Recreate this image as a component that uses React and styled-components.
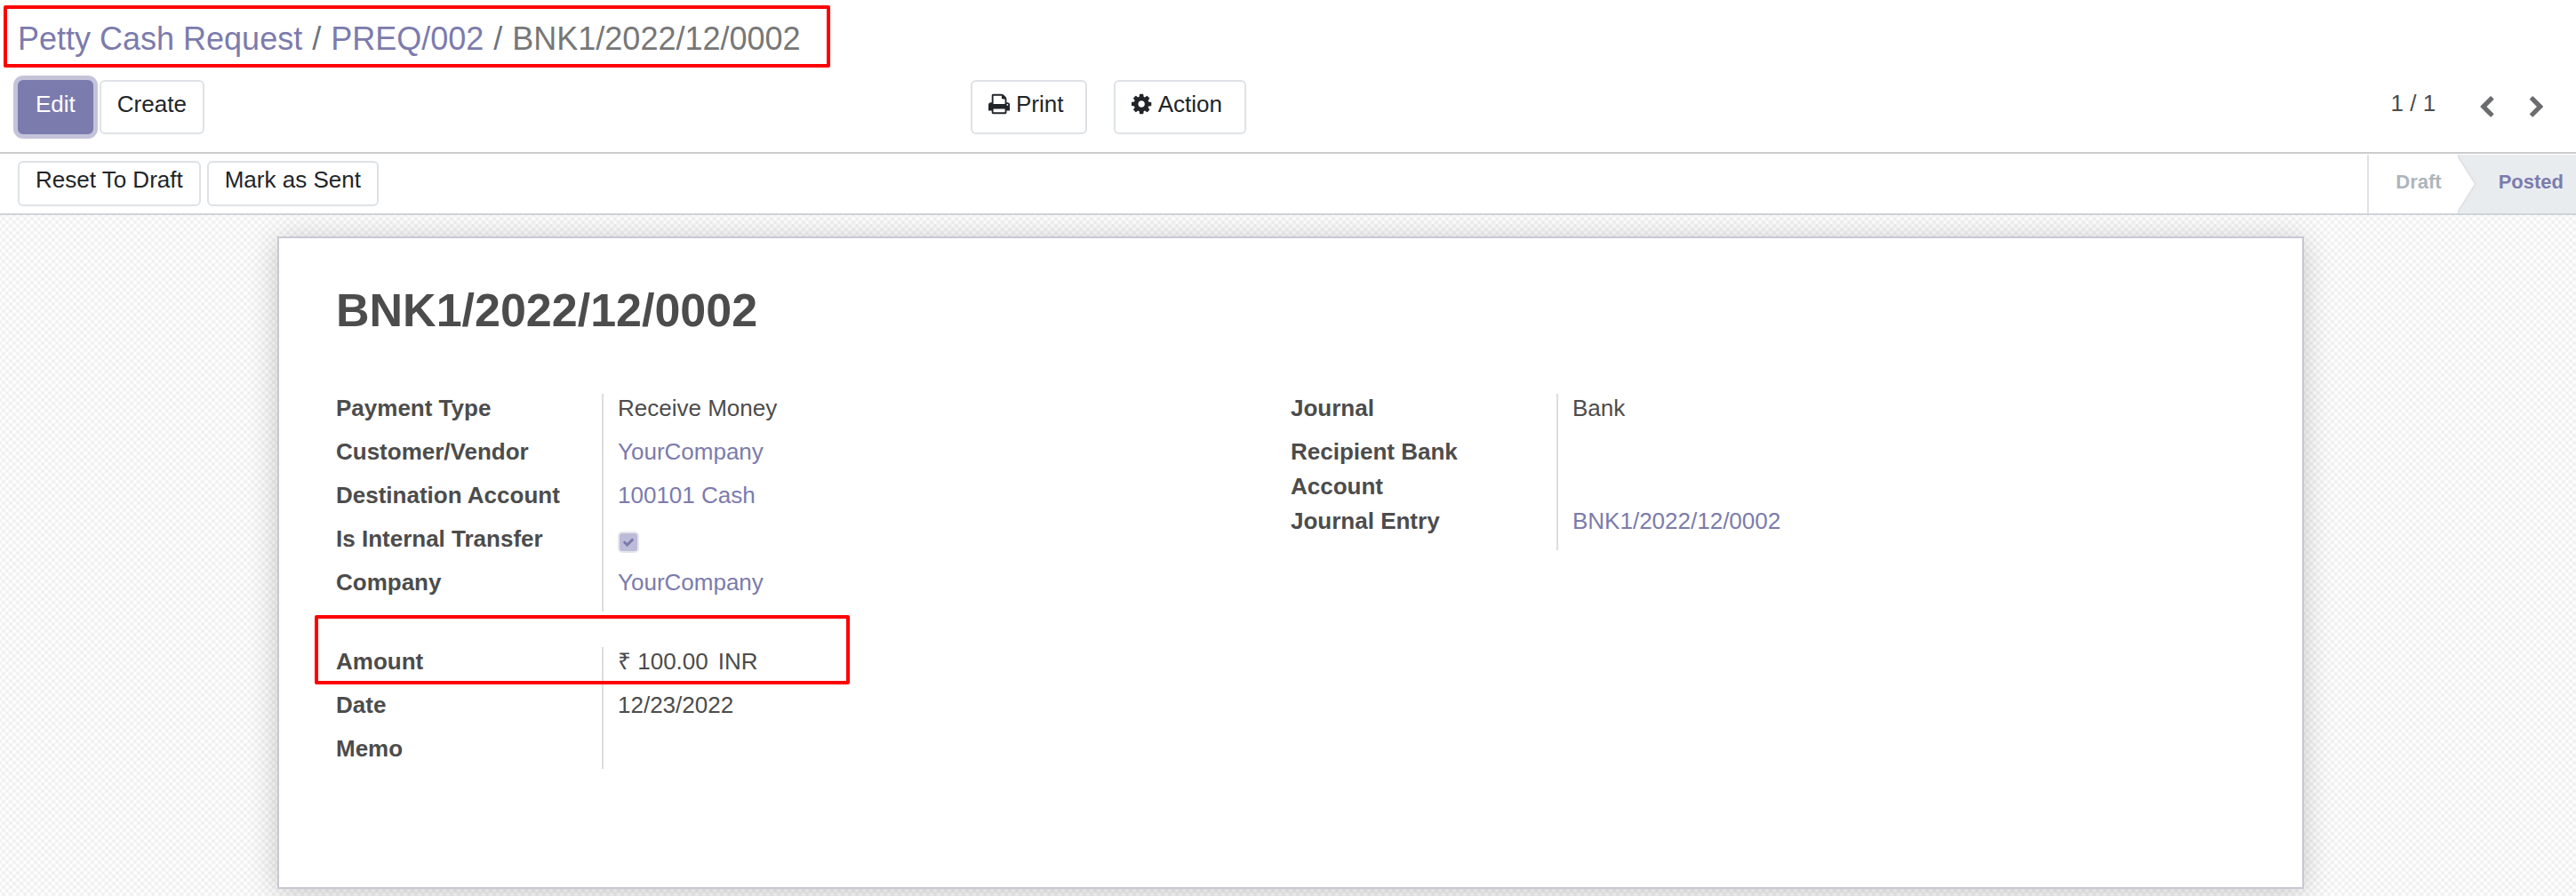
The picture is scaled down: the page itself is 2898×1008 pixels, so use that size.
import React from "react";
import styled, { createGlobalStyle } from "styled-components";

const link = "#7c7bad";
const ink = "#4c4c4c";

const GlobalStyle = createGlobalStyle`
  *, *::before, *::after { box-sizing: border-box; }
  html, body, #root { min-height: 100vh; }
  body {
    margin: 0;
    background: #fff;
    color: ${ink};
    font: 26px/39px "Liberation Sans", Arial, sans-serif;
  }
  #root { display: flex; }
`;

const Page = styled.div`
  position: relative;
  display: flex;
  flex-direction: column;
  flex: 1;
  min-height: 100vh;
`;

const ControlPanel = styled.header`
  padding: 17px 20px 20px;
  border-bottom: 2px solid #ccc;
`;

const Breadcrumb = styled.nav`
  display: flex;
  font-size: 36px;
  line-height: 54px;
  color: #777;
`;

const Separator = styled.span`
  padding: 0 11px;
  color: #6c757d;
`;

const Link = styled.a`
  color: ${link};
  text-decoration: none;
`;

const Toolbar = styled.div`
  display: grid;
  grid-template-columns: 3fr 5fr;
  margin-top: 19px;
`;

const Cluster = styled.div`
  display: flex;
  gap: ${(p) => p.$gap}px;
`;

const Spread = styled.div`
  display: flex;
  justify-content: space-between;
`;

const Button = styled.button`
  display: flex;
  gap: 7px;
  padding: ${(p) => (p.$compact ? "0 18px 8px" : "6px 18px 12px")};
  padding-right: ${(p) => (p.$menu ? 25 : 18)}px;
  border: 2px solid ${(p) => (p.$primary ? link : "#dee2e6")};
  border-radius: 6px;
  background: ${(p) => (p.$primary ? link : "#fff")};
  box-shadow: ${(p) => (p.$primary ? "0 0 0 5px rgba(124, 123, 173, 0.45)" : "none")};
  color: ${(p) => (p.$primary ? "#fff" : "#212529")};
  font: inherit;
  white-space: nowrap;
`;

const Icon = styled.svg`
  height: 26px;
  margin-top: 6px;
  fill: currentColor;
`;

const Pager = styled.div`
  display: flex;
  align-items: flex-start;
`;

const PagerButton = styled.button`
  display: flex;
  padding: 11px 20px;
  border: 0;
  background: none;
  color: #6b6c70;

  & + & { margin-right: -3px; }
`;

const PagerCount = styled.span`
  padding: 7px 30px 0 0;
`;

const StatusBar = styled.div`
  display: flex;
  justify-content: space-between;
  padding-left: 20px;
  border-bottom: 2px solid #ced4da;
`;

const StatusActions = styled(Cluster)`
  padding: 8px 0;
`;

const Steps = styled.ol`
  display: flex;
  margin: 1px 0 0;
  padding: 0;
  list-style: none;
  border-left: 2px solid #dee2e6;
  font-size: 22px;
  font-weight: bold;
  line-height: 62px;
`;

const Step = styled.li`
  position: relative;
  padding: ${(p) => (p.$active ? "0 14px 0 46px" : "0 18px 0 30px")};
  background: ${(p) => (p.$active ? "#e9ecef" : "#fff")};
  color: ${(p) => (p.$active ? link : "#adb5bd")};
`;

const StepArrow = styled.svg`
  position: absolute;
  top: 0;
  left: 0;
  width: 22px;
  height: 100%;
  fill: #fff;
  stroke: #dee2e6;
  stroke-width: 2px;
`;

const Backdrop = styled.main`
  flex: 1;
  padding: 24px 0 8px 6px;
  background-color: #f7f7f7;
  background-image:
    radial-gradient(circle at 4px 0, #fff 1px, transparent 3px),
    radial-gradient(circle at 4px 8px, #fff 1px, transparent 3px),
    radial-gradient(circle at 0 4px, #fff 1px, transparent 3px),
    radial-gradient(circle at 8px 4px, #fff 1px, transparent 3px),
    radial-gradient(circle at 4px 4px, #eee 1px, transparent 3px),
    radial-gradient(circle at 0 0, #eee 1px, transparent 3px),
    radial-gradient(circle at 8px 8px, #eee 1px, transparent 3px),
    radial-gradient(circle at 8px 0, #eee 1px, transparent 3px),
    radial-gradient(circle at 0 8px, #eee 1px, transparent 3px);
  background-size: 8px 8px;
`;

const Sheet = styled.section`
  max-width: 2280px;
  min-height: 734px;
  margin: 0 auto;
  padding: 42px 64px;
  border: 2px solid #c8c8d3;
  background: #fff;
  box-shadow: 0 4px 32px rgba(0, 0, 0, 0.2);
`;

const Title = styled.h1`
  margin: 0 0 52px;
  font-size: 52px;
  line-height: 78px;
`;

const Columns = styled.div`
  display: grid;
  grid-template-columns: 1fr 1fr;
  align-items: start;
`;

const Group = styled.dl`
  margin: 0 0 37px;
  padding-bottom: 3px;
  background: linear-gradient(#ddd, #ddd) 299px 3px / 2px 100% no-repeat;
`;

const Row = styled.div`
  display: grid;
  grid-template-columns: 299px 1fr;
`;

const Term = styled.dt`
  padding-right: 60px;
  font-weight: bold;
  white-space: ${(p) => (p.$wrap ? "normal" : "nowrap")};
`;

const Value = styled.dd`
  display: flex;
  gap: 11px;
  margin: 0;
  padding: 0 0 10px 18px;

  &:empty { padding-bottom: 0; }
`;

const CheckWrap = styled.span`
  display: grid;
  width: 24px;
  height: 24px;
  margin: 11px 0 4px;

  & > * { grid-area: 1 / 1; }
`;

const Checkbox = styled.input`
  appearance: none;
  width: 24px;
  height: 24px;
  margin: 0;
  border: 2px solid #e4e6ec;
  border-radius: 5px;
  background: #bdbcd8;
`;

const CheckMark = styled.svg`
  place-self: center;
  width: 14px;
  height: 14px;
  fill: ${link};
  pointer-events: none;
`;

const Highlight = styled.div`
  position: absolute;
  top: ${(p) => p.$top}px;
  left: ${(p) => p.$left}px;
  width: ${(p) => p.$width}px;
  height: ${(p) => p.$height}px;
  border: 4px solid #f00;
  border-radius: 2px;
  pointer-events: none;
`;

const paths = {
  print:
    "M448 1536h896v-256h-896v256zm0-640h896v-384h-160q-40 0-68-28t-28-68v-160h-640v640zm1152 64q0-26-19-45t-45-19-45 19-19 45 19 45 45 19 45-19 19-45zm128 0v416q0 13-9.5 22.5t-22.5 9.5h-224v160q0 40-28 68t-68 28h-960q-40 0-68-28t-28-68v-160h-224q-13 0-22.5-9.5t-9.5-22.5v-416q0-79 56.5-135.5t135.5-56.5h64v-544q0-40 28-68t68-28h672q40 0 88 20t76 48l152 152q28 28 48 76t20 88v256h64q79 0 135.5 56.5t56.5 135.5z",
  cog: "M1152 896q0-106-75-181t-181-75-181 75-75 181 75 181 181 75 181-75 75-181zm512-109v222q0 12-8 23t-20 13l-185 28q-19 54-39 91 35 50 107 138 10 12 10 25t-9 23q-27 37-99 108t-94 71q-12 0-26-9l-138-108q-44 23-91 38-16 136-29 186-7 28-36 28h-222q-14 0-24.5-8.5t-11.5-21.5l-28-184q-49-16-90-37l-141 107q-10 9-25 9-14 0-25-11-126-114-165-168-7-10-7-23 0-12 8-23 15-21 51-66.5t54-70.5q-27-50-41-99l-183-27q-13-2-21-12.5t-8-23.5v-222q0-12 8-23t19-13l186-28q14-46 39-92-40-57-107-138-10-12-10-24 0-10 9-23 26-36 98.5-107.5t94.5-71.5q13 0 26 10l138 107q44-23 91-38 16-136 29-186 7-28 36-28h222q14 0 24.5 8.5t11.5 21.5l28 184q49 16 90 37l142-107q9-9 24-9 13 0 25 10 129 119 165 170 7 8 7 22 0 12-8 23-15 21-51 66.5t-54 70.5q26 50 41 98l183 28q13 2 21 12.5t8 23.5z",
  left: "M1427 301l-531 531 531 531q19 19 19 45t-19 45l-166 166q-19 19-45 19t-45-19l-742-742q-19-19-19-45t19-45l742-742q19-19 45-19t45 19l166 166q19 19 19 45t-19 45z",
  right:
    "M1363 877l-742 742q-19 19-45 19t-45-19l-166-166q-19-19-19-45t19-45l531-531-531-531q-19-19-19-45t19-45l166-166q19-19 45-19t45 19l742 742q19 19 19 45t-19 45z",
  check:
    "M1671 566q0 40-28 68l-724 724-136 136q-28 28-68 28t-68-28l-136-136-362-362q-28-28-28-68t28-68l136-136q28-28 68-28t68 28l294 295 656-657q28-28 68-28t68 28l136 136q28 28 28 68z",
};

function Glyph({ name, box }) {
  return (
    <Icon viewBox={box} aria-hidden="true">
      <path d={paths[name]} />
    </Icon>
  );
}

function Field({ label, wrap, children }) {
  return (
    <Row>
      <Term $wrap={wrap}>{label}</Term>
      <Value>{children}</Value>
    </Row>
  );
}

export default function App() {
  return (
    <Page>
      <GlobalStyle />
      <ControlPanel>
        <Breadcrumb aria-label="Breadcrumb">
          <Link href="#requests">Petty Cash Request</Link>
          <Separator>/</Separator>
          <Link href="#preq-002">PREQ/002</Link>
          <Separator>/</Separator>
          <span>BNK1/2022/12/0002</span>
        </Breadcrumb>
        <Toolbar>
          <Cluster $gap={7}>
            <Button type="button" $primary>Edit</Button>
            <Button type="button">Create</Button>
          </Cluster>
          <Spread>
            <Cluster $gap={30}>
              <Button type="button" $menu>
                <Glyph name="print" box="64 0 1664 1792" />
                Print
              </Button>
              <Button type="button" $menu>
                <Glyph name="cog" box="128 0 1536 1792" />
                Action
              </Button>
            </Cluster>
            <Pager>
              <PagerCount>1 / 1</PagerCount>
              <PagerButton type="button" aria-label="Previous">
                <Glyph name="left" box="380 -60 1066 1792" />
              </PagerButton>
              <PagerButton type="button" aria-label="Next">
                <Glyph name="right" box="346 -60 1066 1792" />
              </PagerButton>
            </Pager>
          </Spread>
        </Toolbar>
      </ControlPanel>

      <StatusBar>
        <StatusActions $gap={7}>
          <Button type="button" $compact>Reset To Draft</Button>
          <Button type="button" $compact>Mark as Sent</Button>
        </StatusActions>
        <Steps>
          <Step>Draft</Step>
          <Step $active aria-current="step">
            <StepArrow viewBox="0 0 22 66" preserveAspectRatio="none" aria-hidden="true">
              <path d="M-2 -2H1V3L20 33L1 63V68H-2" />
            </StepArrow>
            Posted
          </Step>
        </Steps>
      </StatusBar>

      <Backdrop>
        <Sheet>
          <Title>BNK1/2022/12/0002</Title>
          <Columns>
            <Group>
              <Field label="Payment Type">Receive Money</Field>
              <Field label="Customer/Vendor">
                <Link href="#partner">YourCompany</Link>
              </Field>
              <Field label="Destination Account">
                <Link href="#account">100101 Cash</Link>
              </Field>
              <Field label={<label htmlFor="internal">Is Internal Transfer</label>}>
                <CheckWrap>
                  <Checkbox id="internal" type="checkbox" defaultChecked disabled />
                  <CheckMark viewBox="0 0 1792 1792" aria-hidden="true">
                    <path d={paths.check} />
                  </CheckMark>
                </CheckWrap>
              </Field>
              <Field label="Company">
                <Link href="#company">YourCompany</Link>
              </Field>
            </Group>
            <Group>
              <Field label="Journal">Bank</Field>
              <Field label="Recipient Bank Account" wrap />
              <Field label="Journal Entry">
                <Link href="#entry">BNK1/2022/12/0002</Link>
              </Field>
            </Group>
            <Group>
              <Field label="Amount">
                <span>₹ 100.00</span>
                <span>INR</span>
              </Field>
              <Field label="Date">12/23/2022</Field>
              <Field label="Memo" />
            </Group>
          </Columns>
        </Sheet>
      </Backdrop>

      <Highlight $top={6} $left={4} $width={930} $height={70} />
      <Highlight $top={692} $left={354} $width={602} $height={78} />
    </Page>
  );
}
